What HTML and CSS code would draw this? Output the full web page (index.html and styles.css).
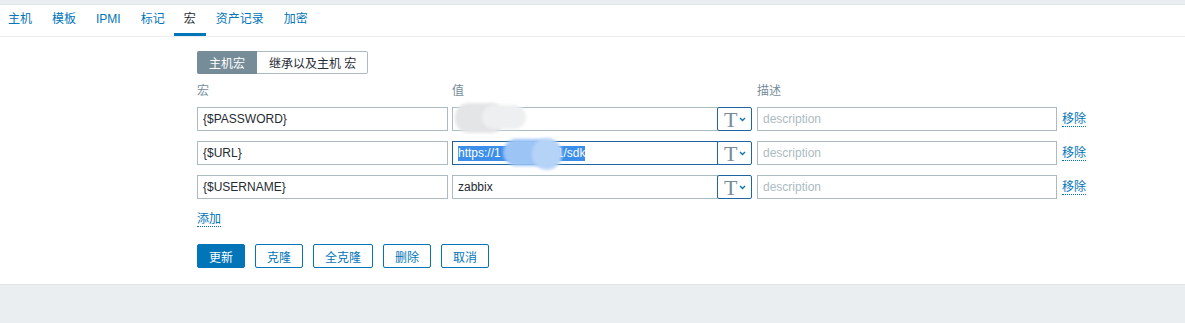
FILE: index.html
```html
<!DOCTYPE html>
<html lang="zh">

<head>
    <meta charset="UTF-8" />
    <title>宏</title>
    <link rel="stylesheet" href="styles.css">
</head>

<body>
    <div class="top_strip"></div>

    <div class="panel">
        <ul class="tabs">
            <li>主机</li>
            <li>模板</li>
            <li>IPMI</li>
            <li>标记</li>
            <li class="active">宏</li>
            <li>资产记录</li>
            <li>加密</li>
        </ul>

        <form class="macro_form">
            <div class="segment">
                <span class="seg selected">主机宏</span>
                <span class="seg">继承以及主机 宏</span>
            </div>

            <div class="macro_grid">
                <div class="head">宏</div>
                <div class="head">值</div>
                <div class="head">描述</div>
                <div></div>

                <input class="field" type="text" value="{$PASSWORD}" />
                <div class="value_cell">
                    <div class="value_wrap">
                        <input class="field value" type="text" value="" />
                        <span class="blur gray"></span>
                        <span class="blur gray2"></span>
                    </div>
                    <button type="button" class="type_btn"><span class="t">T</span><svg width="7" height="5" viewBox="0 0 7 5"><path d="M1 1l2.5 2.5L6 1" fill="none" stroke="#0275b8" stroke-width="1.3"/></svg></button>
                </div>
                <input class="field" type="text" placeholder="description" />
                <a class="link">移除</a>

                <input class="field" type="text" value="{$URL}" />
                <div class="value_cell">
                    <div class="value_wrap">
                        <div class="field value focus"><span class="sel">https://1<span class="gap"></span>1/sdk</span></div>
                        <span class="blur blue"></span>
                        <span class="blur blue2"></span>
                    </div>
                    <button type="button" class="type_btn"><span class="t">T</span><svg width="7" height="5" viewBox="0 0 7 5"><path d="M1 1l2.5 2.5L6 1" fill="none" stroke="#0275b8" stroke-width="1.3"/></svg></button>
                </div>
                <input class="field" type="text" placeholder="description" />
                <a class="link">移除</a>

                <input class="field" type="text" value="{$USERNAME}" />
                <div class="value_cell">
                    <div class="value_wrap">
                        <input class="field value" type="text" value="zabbix" />
                    </div>
                    <button type="button" class="type_btn"><span class="t">T</span><svg width="7" height="5" viewBox="0 0 7 5"><path d="M1 1l2.5 2.5L6 1" fill="none" stroke="#0275b8" stroke-width="1.3"/></svg></button>
                </div>
                <input class="field" type="text" placeholder="description" />
                <a class="link">移除</a>
            </div>

            <a class="link add">添加</a>

            <div class="actions">
                <button type="button" class="btn primary">更新</button>
                <button type="button" class="btn">克隆</button>
                <button type="button" class="btn">全克隆</button>
                <button type="button" class="btn">删除</button>
                <button type="button" class="btn">取消</button>
            </div>
        </form>
    </div>
</body>

</html>
```

FILE: styles.css
```css
body {
    margin: 0;
    font-family: "Liberation Sans", "Noto Sans CJK SC", sans-serif;
    font-size: 12px;
    color: #1f2c33;
    background-color: #ebeef0;
}

.top_strip {
    height: 4px;
    border-bottom: 1px solid #dfe4e7;
}

.panel {
    background-color: #fff;
    height: 279px;
    border-bottom: 1px solid #dfe4e7;
}

/* tabs */
.tabs {
    display: flex;
    list-style: none;
    margin: 0 0 0 -2px;
    padding: 0;
    height: 31px;
    border-bottom: 1px solid #ebeef0;
}

.tabs li {
    padding: 7px 10px 0;
    height: 24px;
    line-height: 14px;
    color: #0275b8;
    box-sizing: content-box;
}

.tabs li.active {
    color: #1f2c33;
    border-bottom: 3px solid #0275b8;
    height: 21px;
    margin-left: -1px;
}

/* form */
.macro_form {
    padding: 14px 0 0 197px;
}

.segment {
    display: inline-flex;
    height: 23px;
}

.seg {
    display: flex;
    align-items: center;
    padding: 0 11px 0 12px;
    border: 1px solid #acbbc2;
    border-left: none;
    border-radius: 0 2px 2px 0;
}

.seg.selected {
    background-color: #768d99;
    border-color: #768d99;
    color: #fff;
    border-radius: 2px 0 0 2px;
    padding: 0 11px 0 12px;
}

.macro_grid {
    display: grid;
    grid-template-columns: 251px 299px 300px auto;
    column-gap: 5px;
    row-gap: 10px;
    margin-top: 10px;
    align-items: center;
}

.macro_grid .head {
    color: #768d99;
    margin-bottom: -1px;
    line-height: 14px;
}

.macro_grid .head:nth-child(2) {
    margin-left: -1px;
}

.field {
    box-sizing: border-box;
    height: 24px;
    width: 100%;
    margin: 0;
    padding: 0 5px;
    border: 1px solid #acbbc2;
    font-family: inherit;
    font-size: 12px;
    color: #1f2c33;
    background: #fff;
    outline: none;
}

.field::placeholder {
    color: #acbbc2;
}

.value_cell {
    display: flex;
    margin-left: -1px;
}

.value_wrap {
    position: relative;
    flex: 1;
    margin-right: -1px;
}

.field.value {
    display: flex;
    align-items: center;
}

.field.focus {
    border-color: #1f65a3;
}

.sel {
    background-color: #3b8eea;
    color: #fff;
    line-height: 15px;
    display: inline-flex;
}

.sel .gap {
    display: inline-block;
    width: 56px;
}

.blur {
    position: absolute;
    border-radius: 14px;
    filter: blur(1.5px);
}

.blur.gray {
    left: 3px;
    top: -4px;
    width: 50px;
    height: 30px;
    background-color: #e4e5e7;
}

.blur.gray2 {
    left: 30px;
    top: -2px;
    width: 44px;
    height: 24px;
    background-color: #eeeff0;
}

.blur.blue {
    left: 51px;
    top: -2px;
    width: 48px;
    height: 27px;
    background-color: #9cc4f5;
}

.blur.blue2 {
    left: 80px;
    top: -3px;
    width: 30px;
    height: 32px;
    border-radius: 15px;
    background-color: #b5d3f7;
}

.type_btn {
    position: relative;
    width: 35px;
    height: 24px;
    margin: 0;
    padding: 0 5px 0 6px;
    border: 1px solid #1f65a3;
    border-radius: 2px;
    background: #fff;
    display: flex;
    align-items: center;
    justify-content: space-between;
}

.type_btn .t {
    font-family: "Liberation Serif", serif;
    font-size: 22px;
    color: #768d99;
    line-height: 20px;
    margin-top: 2px;
}

.type_btn svg {
    margin-top: 1px;
}

.link {
    color: #0275b8;
    text-decoration: none;
    border-bottom: 1px dotted #0275b8;
    justify-self: start;
    line-height: 14px;
    cursor: pointer;
}

.add {
    display: inline-block;
    margin-top: 13px;
}

.actions {
    display: flex;
    gap: 10px;
    margin-top: 17px;
}

.btn {
    height: 24px;
    padding: 0 11px;
    font-family: inherit;
    font-size: 12px;
    color: #0275b8;
    background: #fff;
    border: 1px solid #0275b8;
    border-radius: 2px;
}

.btn.primary {
    color: #fff;
    background-color: #0275b8;
}
```
